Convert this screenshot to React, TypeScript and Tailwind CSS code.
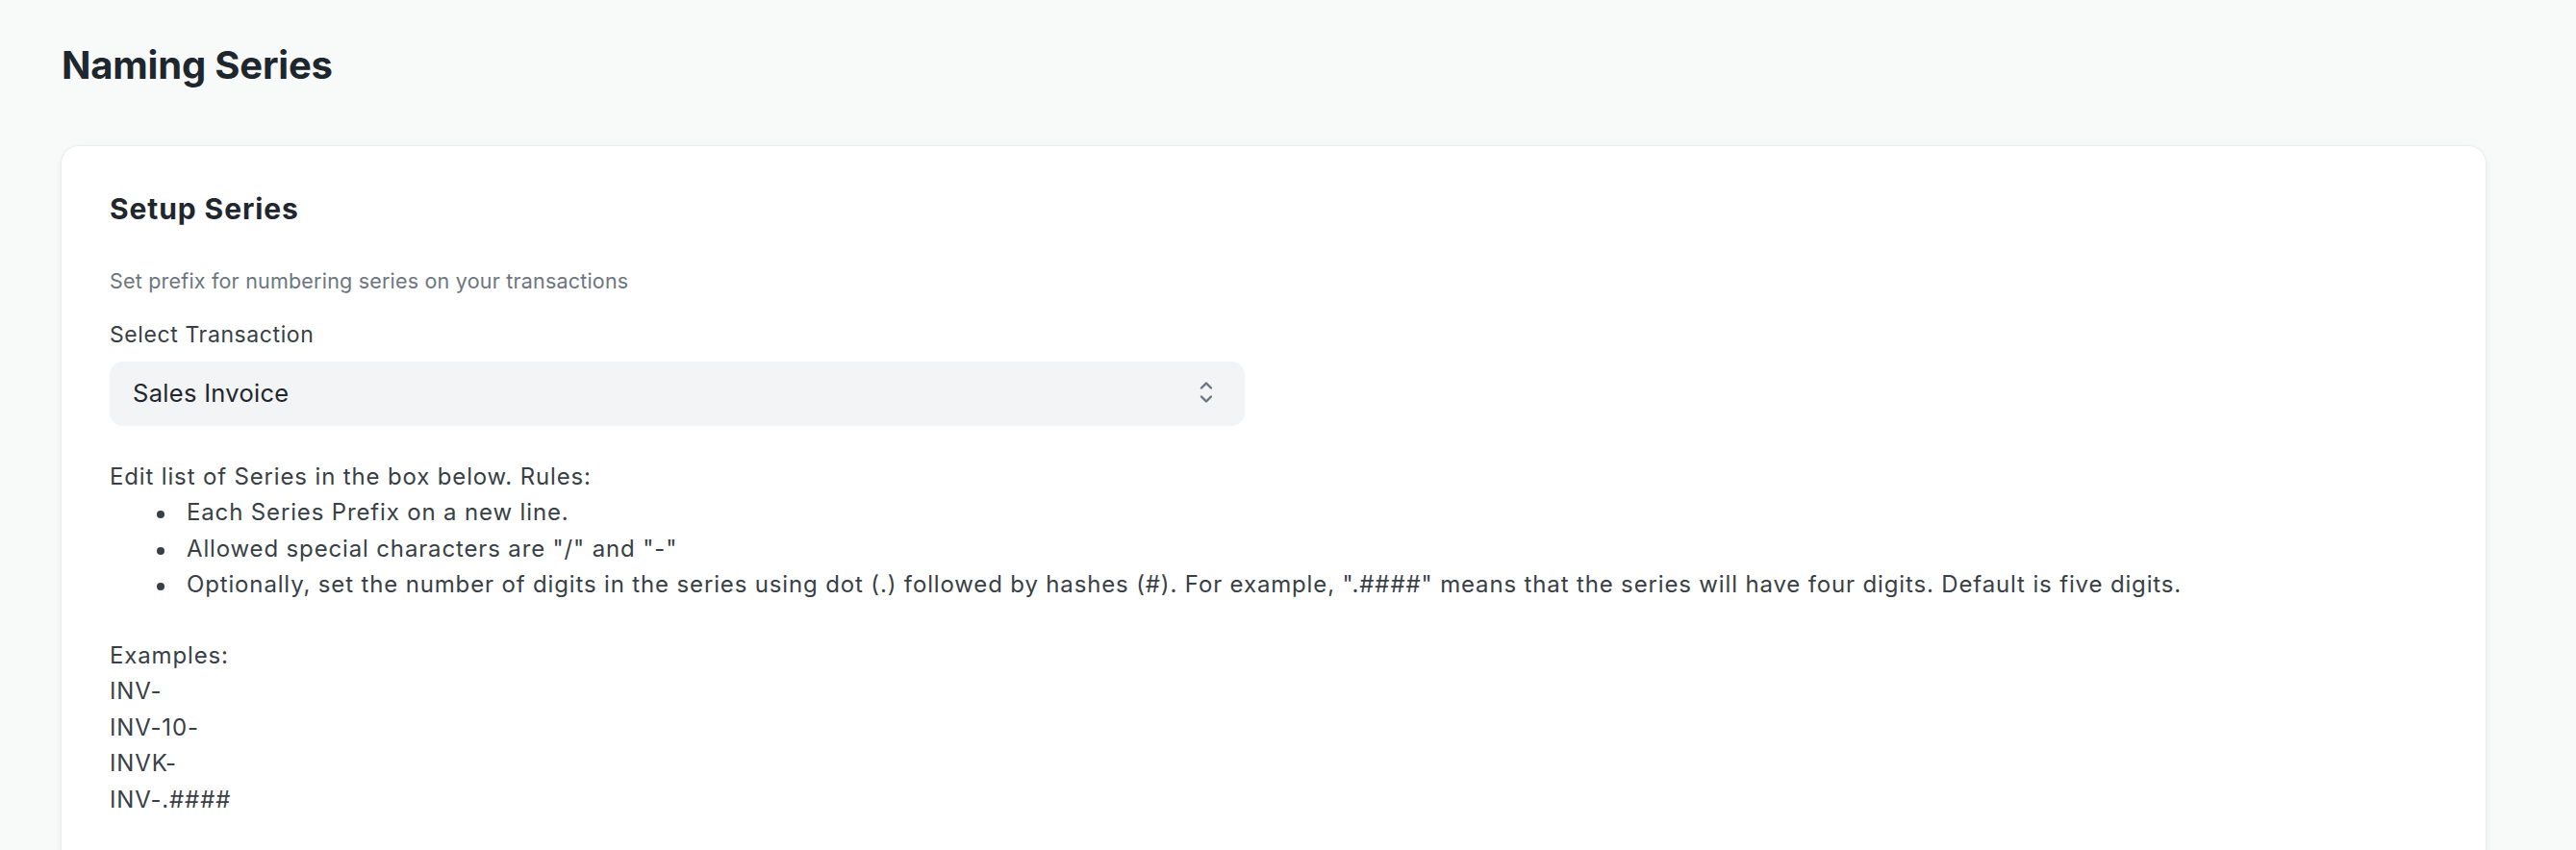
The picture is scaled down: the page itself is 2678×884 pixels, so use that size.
const rules = [
  'Each Series Prefix on a new line.',
  'Allowed special characters are "/" and "-"',
  'Optionally, set the number of digits in the series using dot (.) followed by hashes (#). For example, ".####" means that the series will have four digits. Default is five digits.',
];

const examples = ['INV-', 'INV-10-', 'INVK-', 'INV-.####'];

function SelectChevrons() {
  return (
    <svg
      width="14"
      height="24"
      viewBox="0 0 14 24"
      fill="none"
      stroke="currentColor"
      strokeWidth="2.4"
      strokeLinecap="round"
      strokeLinejoin="round"
    >
      <path d="M2 6.5 7 1.5 12 6.5" />
      <path d="M2 15.5 7 20.5 12 15.5" />
    </svg>
  );
}

export default function App() {
  return (
    <div className="min-h-screen bg-[#f8f9f9] pr-[94px] pl-[64px] font-['Inter','Noto_Sans',sans-serif]">
      <h1 className="pt-[48px] text-[40px] leading-[40px] font-bold tracking-[-0.005em] text-[#1f272e]">
        Naming Series
      </h1>

      <div className="mt-[64px] rounded-[18px] bg-white px-[50px] pt-[50px] pb-[80px] shadow-[0_0_0_1px_rgba(0,0,0,0.025),0_1px_6px_rgba(0,0,0,0.07)]">
        <h2 className="text-[30px] leading-[30px] font-bold tracking-[0.9px] text-[#1f272e]">
          Setup Series
        </h2>

        <p className="mt-[50px] text-[21.5px] leading-[21.5px] tracking-[0.2px] text-[#6c7680]">
          Set prefix for numbering series on your transactions
        </p>

        <label className="mt-[33px] block text-[23px] leading-[23px] tracking-[0.6px] text-[#383f46]">
          Select Transaction
        </label>

        <div className="mt-[16px] flex h-[67px] w-[1180px] items-center justify-between rounded-[14px] bg-[#f3f4f6] pr-[33px] pl-[24px]">
          <span className="text-[25.5px] tracking-[0.3px] text-[#1f272e]">
            Sales Invoice
          </span>
          <span className="text-[#6b7280]">
            <SelectChevrons />
          </span>
        </div>

        <div className="mt-[34px] text-[24px] leading-[37.5px] tracking-[0.85px] text-[#383f46]">
          <div>Edit list of Series in the box below. Rules:</div>
          <ul className="pl-[49px]">
            {rules.map(rule => (
              <li key={rule} className="flex">
                <span className="mt-[17px] mr-[23px] size-[8px] shrink-0 rounded-full bg-[#383f46]" />
                <span>{rule}</span>
              </li>
            ))}
          </ul>

          <div className="mt-[36px]">
            <div>Examples:</div>
            {examples.map(ex => (
              <div key={ex}>{ex}</div>
            ))}
          </div>
        </div>
      </div>
    </div>
  );
}
